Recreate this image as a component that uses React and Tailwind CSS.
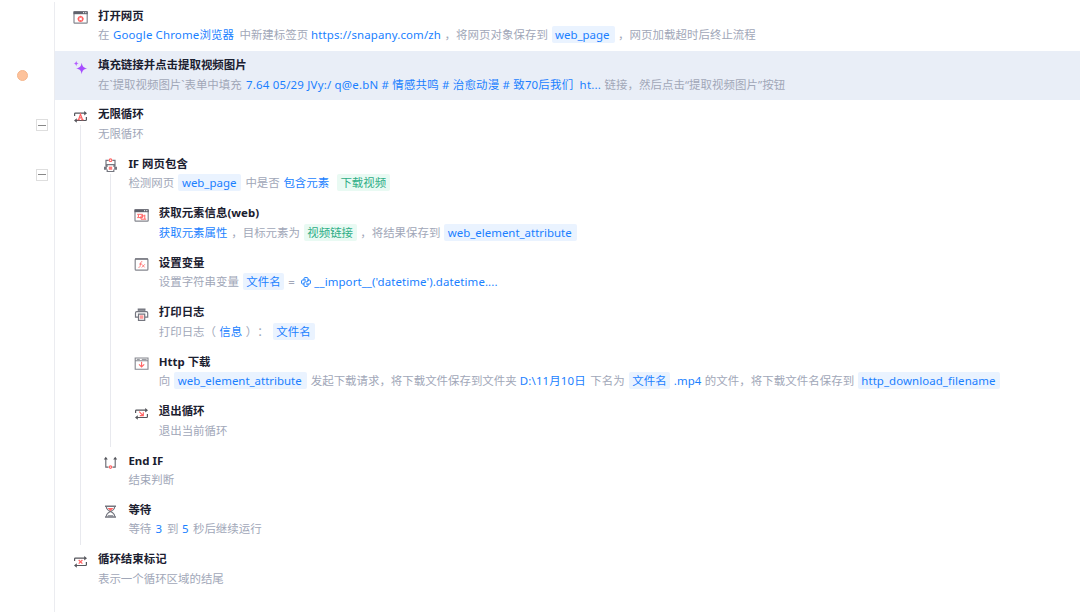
import clsx from 'clsx';

const GRAY = '#74767f';
const RED = '#ff6464';
const BLUE = '#1a7fff';

function Svg({ children }) {
  return (
    <svg className="block h-[15px] w-[15px] shrink-0" viewBox="0 0 15 15" fill="none" stroke={GRAY} strokeWidth="1.2">
      {children}
    </svg>
  );
}

function BrowserFrame() {
  return (
    <>
      <rect x="1" y="1.8" width="13.2" height="11.4" rx="0.8" stroke="#85878f" />
      <path d="M0.5 1.3h14.200v2.900h-14.200z" fill="#5f616b" stroke="none" />
      <path d="M10 2.700h1.200M12.200 2.700h1.200" stroke="#fff" strokeWidth="1" />
    </>
  );
}

function LoopArrows() {
  return (
    <>
      <path d="M1.600 7V5c0-.5.3-.8.8-.8h9.600M13.400 8v2.700c0 .5-.3.8-.8.8H3" stroke="#55565c" strokeWidth="1.2" />
      <path d="M11.200 2l2.800 2.200-2.800 2.200zM3.800 9.300L1 11.500l2.800 2.200z" fill="#55565c" stroke="none" />
    </>
  );
}

const icons = {
  open: (
    <Svg>
      <BrowserFrame />
      <circle cx="7.6" cy="8.9" r="2.2" stroke={RED} strokeWidth="1.3" />
      <path d="M7.6 5.800v2M7.6 10v2M4.500 8.900h2M8.700 8.900h2" stroke={RED} strokeWidth="1" />
    </Svg>
  ),
  sparkle: (
    <Svg>
      <path d="M8.700 2.800c.8 4 1.700 4.900 5.600 5.700-3.900.8-4.800 1.700-5.600 5.700-.8-4-1.700-4.900-5.600-5.700 3.900-.8 4.800-1.700 5.600-5.700z" fill="#a64dff" stroke="none" />
      <path d="M3.200.8c.4 1.900.9 2.400 2.600 2.800-1.700.4-2.200.9-2.600 2.800C2.800 4.500 2.300 4 .6 3.600 2.300 3.200 2.800 2.700 3.200.8z" fill="#b35cff" stroke="none" />
    </Svg>
  ),
  loop: (
    <Svg>
      <LoopArrows />
      <path d="M5.500 10.600l2-5.400 2 5.400M6.200 8.900h2.600M4.500 10.700h2.200M8.300 10.700h2.200" stroke={RED} strokeWidth="1.2" />
    </Svg>
  ),
  branch: (
    <Svg>
      <path d="M5.700 2.300H3v6.500M9.300 2.300H12v6.500M4 9V6.700h7V9M4.200 11.600v1.900h6.600v-1.900" />
      <path d="M1 8.700h2.800v3H1zM11.200 8.700H14v3h-2.800z" fill={GRAY} stroke="none" />
      <circle cx="7.500" cy="2.200" r="1.300" stroke={RED} strokeWidth="1.100" />
      <path d="M5.800 8.600h3.400v3.200H5.800z" fill={RED} stroke="none" opacity="0.85" />
    </Svg>
  ),
  element: (
    <Svg>
      <BrowserFrame />
      <path d="M4.400 6.300h4.200v3.300H4.400zM7 7.900h3.800v3.300H7z" stroke={RED} strokeWidth="1" />
      <path d="M3.200 6.300h1.200M3.200 9.600h1.200M10.800 8V6.700M10.800 11.200h1.400" stroke={RED} strokeWidth="1" />
    </Svg>
  ),
  variable: (
    <Svg>
      <rect x="1.200" y="1.900" width="12.700" height="11.200" rx="0.9" stroke="#85878f" />
      <path d="M1 2h13" strokeWidth="1.400" />
      <path d="M8.300 4.700c-1.300-.4-1.500.5-1.800 2.300-.3 2-.6 3.800-2 3.400M5.200 7h2.700M8 7.400l2.600 3M10.800 7.300l-3 3.200" stroke={RED} strokeWidth="0.8" />
    </Svg>
  ),
  print: (
    <Svg>
      <path d="M4.300 3.800V2.200h6.600v1.600" fill={GRAY} />
      <path d="M4 10.200H1.500V6c0-.8.5-1.300 1.300-1.300h9.600c.8 0 1.300.5 1.300 1.300v4.200h-2.500M4.500 7.200h6.200v6.200H4.500z" />
      <path d="M5.800 8.300h3.600v3.500H5.800z" fill={RED} stroke="none" opacity="0.65" />
    </Svg>
  ),
  download: (
    <Svg>
      <path d="M1.200 2h12.800v11.200H1.200zM1 4.800h13" stroke="#85878f" strokeWidth="1.100" />
      <path d="M2.800 3.400h3M7.800 3.400h4.800" strokeWidth="0.8" />
      <path d="M7.600 5.800v5M5 8.400l2.600 2.600 2.600-2.600" stroke={RED} strokeWidth="1.100" />
    </Svg>
  ),
  exit: (
    <Svg>
      <LoopArrows />
      <path d="M5.200 5.700l3.600 3.600M9.300 6.200v3.500H5.800" stroke={RED} strokeWidth="1.200" />
    </Svg>
  ),
  endIf: (
    <Svg>
      <path d="M2.800 3.500v8.600h2.700M12.200 3.500v8.600H9.500" stroke="#65666e" strokeWidth="1.100" />
      <path d="M.8 4.600l2-2.800 2 2.800zM10.200 4.600l2-2.800 2 2.800z" fill="#55565c" stroke="none" />
      <circle cx="7.500" cy="12.100" r="1.200" stroke={RED} strokeWidth="1.200" />
    </Svg>
  ),
  wait: (
    <Svg>
      <path d="M2 2.200h11M2 13h11" strokeWidth="1.400" />
      <path d="M3.300 2.700c0 2.700 2 3.900 4.200 4.900 2.200-1 4.200-2.200 4.200-4.900M3.300 12.600c0-2.800 2-4 4.200-5 2.200 1 4.200 2.200 4.200 5" strokeWidth="1.100" />
      <path d="M4.400 3.900h6.200L7.500 7.100z" fill={RED} stroke="none" />
      <path d="M4.800 11.800h5.400" strokeWidth="1" />
    </Svg>
  ),
  loopEnd: (
    <Svg>
      <LoopArrows />
      <path d="M5.700 6l3.700 3.700M9.400 6L5.700 9.700" stroke={RED} strokeWidth="1.200" />
    </Svg>
  ),
};

function Txt({ w, children }) {
  return <span className={clsx('shrink-0', w)}>{children}</span>;
}

function Val({ w, children }) {
  return <span className={clsx('shrink-0 text-[#1a7fff]', w)}>{children}</span>;
}

function Tag({ w, green, children }) {
  return (
    <span
      className={clsx(
        'flex h-[17px] shrink-0 items-center rounded-xs pl-[3.5px]',
        green ? 'bg-[#e9faf3] text-[#2fae86]' : 'bg-[#eaf3ff] text-[#1a7fff]',
        w
      )}
    >
      {children}
    </span>
  );
}

function PythonIcon() {
  return (
    <svg className="mr-[3px] h-[10px] w-[10px] shrink-0" viewBox="0 0 10 10" fill="none" stroke={BLUE} strokeWidth="1">
      <path d="M3 3V1.500C3 .9 3.400.6 4 .6h2c.6 0 1 .3 1 .9v2.300c0 .7-.4 1.100-1 1.100H4c-.7 0-1 .4-1 1V7H1.600C1 7 .6 6.600.6 6V4c0-.6.4-1 1-1H5" />
      <path d="M7 7v1.500c0 .6-.4.9-1 .9H4c-.6 0-1-.3-1-.9V6.800M7 4V3h1.400c.6 0 1 .4 1 1v2c0 .6-.4 1-1 1H5" />
    </svg>
  );
}

const steps = [
  {
    icon: 'open',
    level: 0,
    title: '打开网页',
    desc: (
      <>
        <Txt w="w-[15px]">在</Txt>
        <Val w="w-[126.5px] tracking-[0.15px]">Google Chrome浏览器</Val>
        <Txt w="w-[71.5px]">中新建标签页</Txt>
        <Val w="w-[133.5px] tracking-[0.13px]">https://snapany.com/zh</Val>
        <Txt w="w-[107px] tracking-[0.05px]">，将网页对象保存到</Txt>
        <Tag w="w-[63px] mr-[3.5px]">web_page</Tag>
        <Txt w="tracking-[0.05px]">，网页加载超时后终止流程</Txt>
      </>
    ),
  },
  {
    icon: 'sparkle',
    level: 0,
    title: '填充链接并点击提取视频图片',
    selected: true,
    breakpoint: true,
    desc: (
      <>
        <Txt w="w-[148px]">在`提取视频图片`表单中填充</Txt>
        <Val w="w-[358.5px] whitespace-pre tracking-[0.2px]">{'7.64 05/29 JVy:/ q@e.bN # 情感共鸣 # 治愈动漫 # 致70后我们  ht...'}</Val>
        <Txt w="tracking-[0.05px]">链接，然后点击“提取视频图片”按钮</Txt>
      </>
    ),
  },
  {
    icon: 'loop',
    level: 0,
    title: '无限循环',
    parent: true,
    desc: <Txt>无限循环</Txt>,
  },
  {
    icon: 'branch',
    level: 1,
    title: 'IF 网页包含',
    parent: true,
    desc: (
      <>
        <Txt w="w-[50px]">检测网页</Txt>
        <Tag w="w-[63px] mr-1">web_page</Tag>
        <Txt w="w-[38px]">中是否</Txt>
        <Val w="w-[53.5px]">包含元素</Val>
        <Tag w="w-[53.5px]" green>下载视频</Tag>
      </>
    ),
  },
  {
    icon: 'element',
    level: 2,
    title: '获取元素信息(web)',
    desc: (
      <>
        <Val w="w-[72.5px]">获取元素属性</Val>
        <Txt w="w-[72.5px]">，目标元素为</Txt>
        <Tag w="w-[53.5px] mr-[3px]" green>视频链接</Tag>
        <Txt w="w-[84px]">，将结果保存到</Txt>
        <Tag w="w-[133px]">web_element_attribute</Tag>
      </>
    ),
  },
  {
    icon: 'variable',
    level: 2,
    title: '设置变量',
    desc: (
      <>
        <Txt w="w-[84px]">设置字符串变量</Txt>
        <Tag w="w-[41.5px] mr-1">文件名</Tag>
        <Txt w="w-[13px]">=</Txt>
        <PythonIcon />
        <Val w="tracking-[0.1px]">__import__('datetime').datetime....</Val>
      </>
    ),
  },
  {
    icon: 'print',
    level: 2,
    title: '打印日志',
    desc: (
      <>
        <Txt w="w-[60.5px]">打印日志（</Txt>
        <Val w="w-[26.5px]">信息</Val>
        <Txt w="w-[27px]">）：</Txt>
        <Tag w="w-[42px]">文件名</Tag>
      </>
    ),
  },
  {
    icon: 'download',
    level: 2,
    title: 'Http 下载',
    desc: (
      <>
        <Txt w="w-[15.5px]">向</Txt>
        <Tag w="w-[133px] mr-[3.5px]">web_element_attribute</Tag>
        <Txt w="w-[209px]">发起下载请求，将下载文件保存到文件夹</Txt>
        <Val w="w-[70.5px] tracking-[0.15px]">D:\11月10日</Val>
        <Txt w="w-[38.5px]">下名为</Txt>
        <Tag w="w-[41.5px] mr-[3.5px]">文件名</Tag>
        <Val w="w-[31px] tracking-[0.1px]">.mp4</Val>
        <Txt w="w-[153px] tracking-[0.05px]">的文件，将下载文件名保存到</Txt>
        <Tag w="w-[142px] tracking-[0.08px]">http_download_filename</Tag>
      </>
    ),
  },
  {
    icon: 'exit',
    level: 2,
    title: '退出循环',
    desc: <Txt>退出当前循环</Txt>,
  },
  {
    icon: 'endIf',
    level: 1,
    title: 'End IF',
    desc: <Txt>结束判断</Txt>,
  },
  {
    icon: 'wait',
    level: 1,
    title: '等待',
    desc: (
      <>
        <Txt w="w-[27px]">等待</Txt>
        <Val w="w-[11.5px]">3</Val>
        <Txt w="w-[15px]">到</Txt>
        <Val w="w-[11px]">5</Val>
        <Txt w="tracking-[0.05px]">秒后继续运行</Txt>
      </>
    ),
  },
  {
    icon: 'loopEnd',
    level: 0,
    title: '循环结束标记',
    desc: <Txt>表示一个循环区域的结尾</Txt>,
  },
];

function Guide() {
  return (
    <div className="w-[30.4px] shrink-0 pl-[7px]">
      <div className="h-full w-px bg-[#e8e9ee]" />
    </div>
  );
}

function Step({ step }) {
  return (
    <div className="flex h-[49.45px]">
      <div className="flex w-[55px] shrink-0 items-center border-r border-[#ebecf0]">
        {step.breakpoint && (
          <div className="ml-[17px] h-[11px] w-[11px] rounded-full border border-[#f5b68c] bg-[#fdc29b]" />
        )}
        {step.parent && (
          <div className="ml-[36px] flex h-[12px] w-[12px] items-center justify-center border border-[#dedede] bg-white">
            <div className="h-px w-[8px] bg-[#888]" />
          </div>
        )}
      </div>
      <div className={clsx('flex min-w-0 flex-1 pl-[18px]', step.selected && 'bg-[#e9eef7]')}>
        {step.level > 0 && <Guide />}
        {step.level > 1 && <Guide />}
        <div className="flex w-[15px] shrink-0 flex-col pt-[8.5px]">
          {icons[step.icon]}
          {step.parent && <div className="mt-px ml-[7px] w-px flex-1 bg-[#e8e9ee]" />}
        </div>
        <div className="ml-[10px] pt-[6px] whitespace-nowrap">
          <div className="h-4 font-bold leading-4 text-[#1b2030]">{step.title}</div>
          <div className="mt-[2.5px] flex h-[17px] items-center leading-[17px] text-[#a1a7b8]">{step.desc}</div>
        </div>
      </div>
    </div>
  );
}

function App() {
  return (
    <div className="flex h-[612px] w-[1080px] flex-col overflow-hidden bg-white pt-[1.6px] font-['Noto_Sans','Noto_Sans_CJK_SC',sans-serif] text-[11.44px] [text-spacing-trim:space-all]">
      {steps.map((step) => (
        <Step key={step.title} step={step} />
      ))}
      <div className="w-[55px] flex-1 border-r border-[#ebecf0]" />
    </div>
  );
}

export default App;
